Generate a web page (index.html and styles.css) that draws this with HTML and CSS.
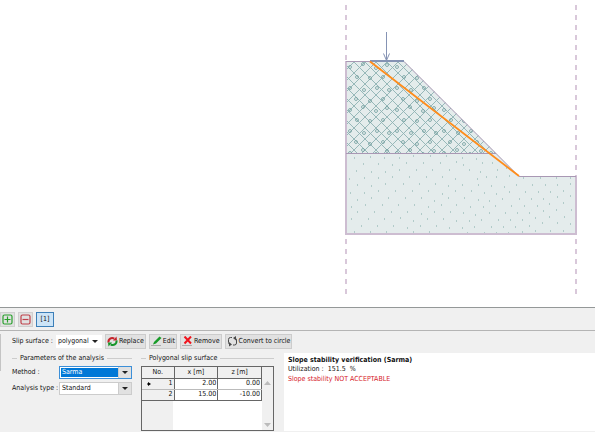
FILE: index.html
```html
<!DOCTYPE html>
<html lang="en">
<head>
    <meta charset="utf-8">
    <title>Slope stability - Analysis</title>
    <link rel="stylesheet" href="styles.css">
</head>
<body>
    <main class="scene">
        <svg class="drawing" viewBox="0 0 595 307" preserveAspectRatio="xMaxYMin meet" role="img" aria-label="Slope cross section">
            <defs>
                <pattern id="mesh" width="11" height="11" patternUnits="userSpaceOnUse" patternTransform="translate(343 62)">
                    <path class="mesh" d="M-1 -1L12 12M12 -1L-1 12"/>
                </pattern>
                <pattern id="stones" width="47" height="43" patternUnits="userSpaceOnUse" patternTransform="translate(346 61)">
                    <g class="stones">
                        <circle cx="4" cy="6" r="1.5"/><circle cx="17" cy="3" r="1.5"/><circle cx="30" cy="7" r="1.5"/>
                        <circle cx="41" cy="4" r="1.5"/><circle cx="11" cy="16" r="1.5"/><circle cx="24" cy="17" r="1.5"/>
                        <circle cx="37" cy="16" r="1.5"/><circle cx="4" cy="27" r="1.5"/><circle cx="18" cy="29" r="1.5"/>
                        <circle cx="31" cy="27" r="1.5"/><circle cx="43" cy="29" r="1.5"/><circle cx="10" cy="38" r="1.5"/>
                        <circle cx="24" cy="40" r="1.5"/><circle cx="37" cy="38" r="1.5"/>
                    </g>
                </pattern>
            </defs>

            <!-- soil layers -->
            <path class="soil" d="M346 61H404L519 176H576V234H346Z"/>
            <path fill="url(#mesh)" d="M346 61H404L496 153H346Z"/>
            <path fill="url(#stones)" d="M346 61H404L496 153H346Z"/>
            <path class="dots" d="M354 158h1M370 157h1M384 158h1M399 158h1M413 156h1M430 156h1M446 156h1M462 158h1M476 159h1
                M363 164h1M378 164h1M392 165h1M406 163h1M423 163h1M440 163h1M456 162h1M463 165h1M482 163h1M492 163h1
                M356 171h1M371 172h1M385 172h1M399 170h1M416 170h1M432 170h1M449 170h1M469 170h1M480 172h1M497 170h1M506 168h1
                M349 179h1M364 178h1M378 178h1M392 177h1M409 177h1M426 177h1M442 177h1M455 179h1M477 179h1M486 177h1M496 177h1M509 176h1M523 178h1M540 178h1M556 178h1M570 178h1
                M357 185h1M371 186h1M385 184h1M403 184h1M419 184h1M435 184h1M448 186h1M462 185h1M478 185h1M491 186h1M504 187h1M516 185h1M532 185h1M545 185h1M557 185h1M570 184h1
                M350 193h1M364 193h1M378 191h1M395 191h1M412 191h1M428 191h1M442 194h1M455 191h1M471 191h1M484 193h1M496 194h1M509 192h1M525 192h1M538 192h1M550 192h1M563 191h1
                M357 200h1M371 198h1M388 198h1M405 198h1M421 198h1M434 201h1M448 198h1M464 198h1M478 200h1M489 201h1M502 199h1M519 199h1M531 199h1M543 199h1M557 197h1M570 196h1
                M351 207h1M365 205h1M382 205h1M398 205h1M414 205h1M428 207h1M441 205h1M456 205h1M470 207h1M483 207h1M495 206h1M511 206h1M524 206h1M537 206h1M549 204h1M563 203h1
                M357 212h1M374 212h1M391 212h1M407 212h1M421 214h1M434 212h1M450 212h1M463 213h1M475 215h1M489 213h1M505 213h1M517 213h1M529 213h1M543 211h1M556 210h1M571 210h1
                M351 219h1M368 219h1M384 219h1M400 218h1M413 221h1M427 219h1M443 219h1M456 221h1M469 221h1M481 220h1M498 220h1M510 220h1M522 220h1M535 218h1M549 217h1M564 217h1
                M361 226h1M377 226h1M393 226h1M407 228h1M420 226h1M436 226h1M449 228h1M462 228h1M474 227h1M491 227h1M503 227h1M515 227h1M529 226h1M542 223h1M557 223h1M570 224h1
                M354 232h1M370 232h1M386 232h1M413 232h1M429 232h1M467 233h1M484 233h1M496 233h1M508 233h1M522 232h1M535 231h1M550 231h1M563 231h1"/>

            <!-- outlines and model edges -->
            <path class="edge wide" d="M346 61V234H576V176"/>
            <path class="edge" d="M346 61.5H404L519 176.5H576M346 153.5H496"/>
            <path class="limit" d="M346 5V61M346 239V295M576 5V176M576 239V295"/>

            <!-- surcharge -->
            <path class="load wide" d="M370 61H404"/>
            <path class="load" d="M386.500 32V60M383.500 53.500L386.500 60.500L389.500 53.500"/>

            <path class="slip" d="M370 61.500L519 176"/>
        </svg>
    </main>

    <nav class="toolbar" aria-label="Analyses">
        <button class="tool" type="button" aria-label="Add analysis">
            <svg width="11" height="11" viewBox="0 0 11 11"><rect class="plus" x="1" y="1" width="9" height="9" rx="1.500"/><path class="plus" d="M5.500 2.500V8.500M2.500 5.500H8.500"/></svg>
        </button>
        <button class="tool" type="button" aria-label="Remove analysis">
            <svg width="11" height="11" viewBox="0 0 11 11"><rect class="minus" x="1" y="1" width="9" height="9" rx="1.500"/><path class="minus" d="M2.500 5.500H8.500"/></svg>
        </button>
        <button class="tool active" type="button">[1]</button>
    </nav>

    <section class="panel">
        <div class="handle"></div>
        <div class="controls">
            <div class="actions">
                <label for="surface">Slip surface :</label>
                <span class="select plain">
                    <select id="surface"><option>polygonal</option><option>circular</option></select>
                </span>
                <button class="btn" type="button">
                    <svg width="11" height="11" viewBox="0 0 11 11"><path class="swap-red" d="M1.500 6.500C1 3 4.500 .8 7.300 2.700"/><path fill="#c5232b" d="M6 4.500L10 4.500L9.500 .5Z"/><path class="swap-green" d="M9.500 4.500C10 8 6.500 10.200 3.700 8.300"/><path fill="#159528" d="M5 6.500L1 6.500L1.500 10.500Z"/></svg>
                    Replace
                </button>
                <button class="btn" type="button">
                    <svg width="11" height="11" viewBox="0 0 11 11"><path fill="#169b27" d="M2 8.500L3 6L8.500 .5L10.500 2L5 7.500Z"/><path class="ground" d="M0 9.500H10"/></svg>
                    Edit
                </button>
                <button class="btn" type="button">
                    <svg width="11" height="11" viewBox="0 0 11 11"><path class="cross" d="M2.500 .5L9 7.500M9 .5L2.500 7.500"/><path class="ground" d="M0 9.500H10"/></svg>
                    Remove
                </button>
                <button class="btn" type="button">
                    <svg width="11" height="11" viewBox="0 0 11 11"><path class="convert" d="M5 1.500H3.500Q1.500 1.500 1.500 3.500V6.500Q1.500 8 3 8.500M6 9H7.500Q9.500 9 9.500 7V4Q9.500 2.500 8 2"/><path fill="#4a4a4a" d="M2 6L5 8.500L2 10.500ZM9 0V4.500L6 2Z"/></svg>
                    Convert to circle
                </button>
            </div>

            <div class="groups">
                <div class="group params">
                    <h2>Parameters of the analysis</h2>
                    <div class="field">
                        <label for="method">Method :</label>
                        <span class="select focused">
                            <select id="method"><option>Sarma</option><option>Spencer</option><option>Janbu</option></select>
                        </span>
                    </div>
                    <div class="field">
                        <label for="type">Analysis type :</label>
                        <span class="select">
                            <select id="type"><option>Standard</option><option>Optimization</option></select>
                        </span>
                    </div>
                </div>

                <div class="group surface">
                    <h2>Polygonal slip surface</h2>
                    <div class="grid">
                        <div class="sheet">
                            <table>
                                <thead>
                                    <tr><th>No.</th><th>x [m]</th><th>z [m]</th></tr>
                                </thead>
                                <tbody>
                                    <tr><td><svg class="marker" width="4" height="4" viewBox="0 0 4 4"><path d="M1 0L4 2L1 4V2.500H0V1.500H1Z"/></svg>1</td><td>2.00</td><td>0.00</td></tr>
                                    <tr><td>2</td><td>15.00</td><td>-10.00</td></tr>
                                </tbody>
                            </table>
                        </div>
                        <div class="scroll">
                            <svg width="7" height="4" viewBox="0 0 7 4"><path d="M0 4L3.500 0L7 4Z"/></svg>
                            <svg width="7" height="4" viewBox="0 0 7 4"><path d="M0 0L3.500 4L7 0Z"/></svg>
                        </div>
                    </div>
                </div>
            </div>
        </div>

        <div class="result">
            <h3>Slope stability verification (Sarma)</h3>
            <p>Utilization :&nbsp; 151.5 &nbsp;%</p>
            <p class="fail">Slope stability NOT ACCEPTABLE</p>
        </div>
    </section>
</body>
</html>
```

FILE: styles.css
```css
* { box-sizing: border-box; }
body { display: flex; flex-direction: column; min-height: 100vh; margin: 0; background: #f0f0f0; color: #111; font: 7px/9px "DejaVu Sans Condensed", "DejaVu Sans", sans-serif; }
button, select { font: inherit; color: inherit; }
h2, h3, p { margin: 0; font-size: inherit; }
svg { display: block; flex: none; }

/* drawing */
.scene { flex: 1; background: #fff; border-bottom: 1px solid #949898; }
.drawing { width: 100%; height: auto; }
.soil { fill: #e4ecec; }
.mesh { fill: none; stroke: #8fb2b3; stroke-width: .9; }
.stones { fill: none; stroke: #6f9c9c; stroke-width: .8; }
.dots { fill: none; stroke: #7fa9a5; stroke-width: 1.2; }
.edge { fill: none; stroke: #a998b4; stroke-width: 1; }
.edge.wide { stroke: #cdbdd1; stroke-width: 2; }
.limit { fill: none; stroke: #d9c8da; stroke-width: 2; stroke-dasharray: 5 5; }
.load { fill: none; stroke: #8593b4; stroke-width: 1; }
.load.wide { stroke-width: 2; }
.slip { fill: none; stroke: #ff8c1a; stroke-width: 1.8; }

/* toolbar */
.toolbar { display: flex; gap: 3px; padding: 4px 0 3px; border-bottom: 1px solid #b4b4b4; }
.tool { display: flex; align-items: center; justify-content: center; width: 15px; height: 15px; padding: 0; background: #e1e1e1; border: 1px solid #cfcfcf; }
.tool.active { width: 18px; background: #cce4f7; border-color: #3c7fb8; }
.plus, .minus { fill: none; stroke: #28a02c; stroke-width: 1.2; }
.minus { stroke: #c0404a; }

/* bottom panel */
.panel { display: flex; height: 101px; padding: 3px 0 1px; }
.handle { width: 1px; height: 37px; margin-right: 11px; background: #c4c4c4; }
.controls { flex: none; width: 280px; margin-right: -8px; }
.actions { display: flex; align-items: center; gap: 3px; white-space: nowrap; }
.btn { display: flex; align-items: center; gap: 1px; height: 15px; padding: 0 1px; background: #e1e1e1; border: 1px solid #ccc; }
.swap-red, .swap-green, .cross, .ground, .convert { fill: none; stroke-width: 2; }
.swap-red { stroke: #c5232b; }
.swap-green { stroke: #159528; }
.cross { stroke: #f0141e; }
.ground { stroke: #aaa; stroke-width: 1; }
.convert { stroke: #4a4a4a; stroke-width: 1; }

.select { position: relative; display: block; flex: none; width: 73px; height: 13px; background: #fff; border: 1px solid #ccc; }
.select select { display: block; width: 100%; height: 100%; padding: 0 12px 0 2px; appearance: none; background: none; border: 0; outline: 0; line-height: 9px; }
.select::after { content: ""; position: absolute; top: 4px; right: 3px; border: 3px solid transparent; border-top: 3px solid #222; border-bottom: 0; pointer-events: none; }
.select::before { content: ""; position: absolute; top: 0; right: 0; bottom: 0; width: 12px; background: #e1e1e1; border-left: 1px solid #ccc; pointer-events: none; }
.select.plain { width: 46px; border-color: #fff; }
.select.plain select { padding: 0 8px 0 1px; }
.select.plain::before { display: none; }
.select.focused { border-color: #3c8fd8; }
.select.focused select { background: #0078d7; border: 1px solid #fff; padding-left: 1px; color: #fff; }

.groups { display: flex; gap: 9px; margin-top: 5px; }
.params { width: 120px; }
.surface { width: 133px; }
.group h2 { display: flex; align-items: center; gap: 3px; font-weight: normal; white-space: nowrap; }
.group h2::before, .group h2::after { content: ""; width: 5px; height: 1px; background: #ccc; }
.group h2::after { flex: 1; }
.field { display: flex; align-items: center; justify-content: space-between; margin-top: 3px; white-space: nowrap; }

.grid { display: flex; height: 65px; margin-top: 3px; border: 1px solid #666; }
.sheet { flex: 1; background: linear-gradient(to right, #f0f0f0 31px, #fff 31px); }
table { width: 100%; table-layout: fixed; border-collapse: collapse; }
th, td { height: 11px; padding: 0 1px; border-right: 1px solid #666; border-bottom: 1px solid #bbb; background: #fff; text-align: right; font-weight: normal; line-height: 9px; }
th { border-color: #666; background: #f0f0f0; text-align: center; }
th:first-child { width: 32px; }
tr:last-child td { border-bottom-color: #666; }
td:first-child { background: #f0f0f0; }
.marker { float: left; margin: 3px 0 0 4px; }
.scroll { display: flex; flex-direction: column; align-items: center; justify-content: space-between; width: 11px; padding: 14px 0 3px; fill: #bbb; }

.result { flex: 1; margin-top: 19px; padding: 3px 4px; background: #fff; }
.result .fail { margin-top: 1px; color: #d6202a; }
```
